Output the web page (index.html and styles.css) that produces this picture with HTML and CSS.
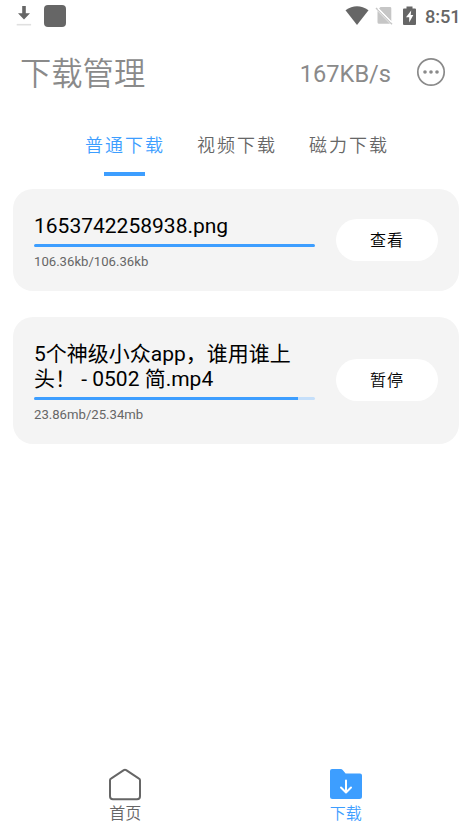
FILE: index.html
```html
<!DOCTYPE html>
<html lang="zh-CN">
<head>
<meta charset="utf-8">
<title>下载管理</title>
<link rel="stylesheet" href="styles.css">
</head>
<body>
<div class="status">
  <svg class="status-dl" width="16" height="22" viewBox="0 0 16 22"><path d="M6.200 1h3.600v7.200h4.200L8 14.600 2 8.200h4.200z" fill="#666"/><path d="M.7 19.700h14.400" stroke="#e0e0e0" stroke-width="1.600"/></svg>
  <span class="status-app"></span>
  <svg class="wifi" width="24" height="20" viewBox="0 0 24 20"><path d="M.5 4.200Q12-3.600 23.500 4.200L12 19z" fill="#666"/></svg>
  <svg class="sim" width="18" height="20" viewBox="0 0 18 20"><path d="M5.500 1h9.500q1.300 0 1.300 1.300V15.300L4 2.500zM2.500 5 15 17.700H4Q2.500 17.700 2.500 16.200z" fill="#c6c6c6"/><path d="M1 2 17 18.300" stroke="#c6c6c6" stroke-width="1.400"/><path d="M3 2.500 16.500 16.200" stroke="#fff" stroke-width="1.200"/></svg>
  <svg class="battery" width="13" height="20" viewBox="0 0 13 20"><path d="M3.500 .5h6v2h2.500q1 0 1 1v14.500q0 1-1 1h-11q-1 0-1-1V3.500q0-1 1-1H3.500z" fill="#666"/><path d="M8.200 4.500 3 11.300h3.200v5.300L10.300 9H7.700z" fill="#fff"/></svg>
  <span class="clock">8:51</span>
</div>
<header class="header">
  <h1 class="title">下载管理</h1>
  <span class="speed">167KB/s</span>
  <svg class="more" width="30" height="30" viewBox="0 0 30 30"><circle cx="15" cy="15" r="13.200" fill="none" stroke="#8a8a8a" stroke-width="1.700"/><g fill="#8a8a8a"><circle cx="9" cy="15" r="1.800"/><circle cx="15" cy="15" r="1.800"/><circle cx="21" cy="15" r="1.800"/></g></svg>
</header>
<nav class="tabs">
  <span class="tab active">普通下载</span>
  <span class="tab">视频下载</span>
  <span class="tab">磁力下载</span>
</nav>
<main class="list">
  <section class="card">
    <div class="info">
      <div class="name">1653742258938.png</div>
      <div class="bar"><div class="fill" style="width:100%"></div></div>
      <div class="size">106.36kb/106.36kb</div>
    </div>
    <button class="action">查看</button>
  </section>
  <section class="card video">
    <div class="info">
      <div class="name">5个神级小众app，谁用谁上<br>头！ - 0502 简.mp4</div>
      <div class="bar"><div class="fill" style="width:94.1%"></div></div>
      <div class="size">23.86mb/25.34mb</div>
    </div>
    <button class="action">暂停</button>
  </section>
</main>
<footer class="bottom">
  <div class="nav-item">
    <svg width="34" height="34" viewBox="0 0 34 34"><path d="M2 12.300Q2 11.200 3 10.600L15.800 2.200Q17 1.400 18.200 2.200L31 10.600Q32 11.200 32 12.300V28.300Q32 31.300 29 31.300H5Q2 31.300 2 28.300z" fill="none" stroke="#666" stroke-width="2"/></svg>
    <span>首页</span>
  </div>
  <div class="nav-item active">
    <svg width="34" height="34" viewBox="0 0 34 34"><path d="M1 3Q1 1 3 1H11.500Q13 1 13.900 2.200L16.600 5.500H31Q33 5.500 33 7.500V28.500Q33 31 30.500 31H3.500Q1 31 1 28.500z" fill="#3d9eff"/><path d="M17 12.500V24M12 19.500 17 24.500 22 19.500" fill="none" stroke="#fff" stroke-width="2" stroke-linecap="round" stroke-linejoin="round"/></svg>
    <span>下载</span>
  </div>
</footer>
</body>
</html>
```
FILE: styles.css
```css
* { box-sizing: border-box; }
body {
  margin: 0;
  height: 840px;
  display: flex;
  flex-direction: column;
  background: #fff;
  color: #666;
  font-family: Roboto, "Noto Sans CJK SC", sans-serif;
}
svg { display: block; flex: none; }
.status { height: 32px; display: flex; align-items: center; padding: 0 11px 0 16px; }
.status-app { width: 22px; height: 22px; margin-left: 12px; border-radius: 4px; background: #666; }
.wifi { margin-left: auto; }
.sim { margin-left: 7px; }
.battery { margin-left: 11px; }
.clock { width: 36px; margin-left: 9px; padding-top: 1px; font-size: 18.300px; font-weight: 500; line-height: 32px; letter-spacing: -.1px; white-space: nowrap; }
.wifi, .sim, .battery { margin-right: -1px; }
.clock { margin-left: 10px; }
.header { height: 84px; display: flex; align-items: center; padding: 0 26px 4px 20px; color: #8a8a8a; }
.title { margin: 0 auto 0 0; padding-top: 6px; font-size: 31.300px; font-weight: 350; line-height: 44px; }
.speed { margin-right: 25px; font-size: 23.600px; line-height: 32px; padding-top: 3px; }
.tabs { height: 73px; display: flex; gap: 32px; padding-left: 85px; }
.tab { width: 80px; height: 60px; display: flex; flex-direction: column; align-items: center; padding-top: 2px; font-size: 18px; font-weight: 350; letter-spacing: 2px; line-height: 56px; white-space: nowrap; }
.tab.active { color: #3d9eff; }
.tab.active::after { content: ""; width: 41px; height: 4px; margin: -2px 1px 0 0; background: #3d9eff; }
.list { padding: 0 13px; display: flex; flex-direction: column; gap: 26px; }
.card { height: 102px; display: flex; align-items: center; justify-content: space-between; padding: 0 21px; border-radius: 20px; background: #f4f4f4; }
.card.video { height: 127px; }
.info { width: 281px; padding-top: 2px; }
.name { color: #000; font-size: 21px; line-height: 25px; white-space: nowrap; padding-top: 1px; }
.bar { height: 3px; margin-top: 5px; border-radius: 2px; background: #c5dffa; overflow: hidden; }
.fill { height: 100%; background: #3d9eff; }
.size { margin-top: 7px; font-size: 13.150px; line-height: 16px; }
.action { width: 102px; height: 42px; padding: 2px 0 0; border: 0; border-radius: 21px; background: #fff; color: #000; font: 350 16px/40px Roboto, "Noto Sans CJK SC", sans-serif; letter-spacing: 1px; }
.video .action { margin-bottom: 2px; }
.bottom { height: 80px; margin-top: auto; display: flex; padding: 8px 15px 0; }
.nav-item { flex: 1; display: flex; flex-direction: column; align-items: center; font-size: 16px; font-weight: 350; line-height: 22px; }
.nav-item span { padding-top: 1px; }
.nav-item.active { color: #3d9eff; padding-right: 1px; }
```
